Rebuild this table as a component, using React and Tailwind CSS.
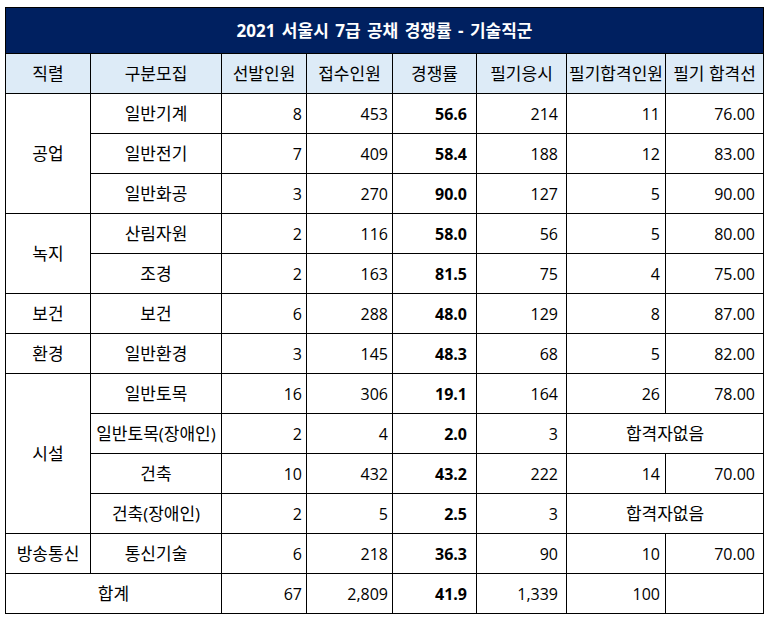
import React from 'react';

const rows = [
  { group: '공업', span: 3, name: '일반기계', v: ['8', '453', '56.6', '214', '11', '76.00'] },
  { name: '일반전기', v: ['7', '409', '58.4', '188', '12', '83.00'] },
  { name: '일반화공', v: ['3', '270', '90.0', '127', '5', '90.00'] },
  { group: '녹지', span: 2, name: '산림자원', v: ['2', '116', '58.0', '56', '5', '80.00'] },
  { name: '조경', v: ['2', '163', '81.5', '75', '4', '75.00'] },
  { group: '보건', span: 1, name: '보건', v: ['6', '288', '48.0', '129', '8', '87.00'] },
  { group: '환경', span: 1, name: '일반환경', v: ['3', '145', '48.3', '68', '5', '82.00'] },
  { group: '시설', span: 4, name: '일반토목', v: ['16', '306', '19.1', '164', '26', '78.00'] },
  { name: '일반토목(장애인)', v: ['2', '4', '2.0', '3'], none: true },
  { name: '건축', v: ['10', '432', '43.2', '222', '14', '70.00'] },
  { name: '건축(장애인)', v: ['2', '5', '2.5', '3'], none: true },
  { group: '방송통신', span: 1, name: '통신기술', v: ['6', '218', '36.3', '90', '10', '70.00'] },
];

const headers = ['직렬', '구분모집', '선발인원', '접수인원', '경쟁률', '필기응시', '필기합격인원', '필기 합격선'];

// right padding per numeric column
const pad = ['pr-[4px]', 'pr-[4px]', 'pr-[9px] font-bold', 'pr-[8px]', 'pr-[5px]', 'pr-[8px]'];

const cell = 'border border-black h-[40px] p-0';
const ko = 'text-[17px] text-center whitespace-nowrap';

export default function App() {
  return (
    <div className="pt-[7px] pl-[5px] bg-white min-h-screen" style={{ fontFamily: '"Open Sans", "Noto Sans CJK KR", sans-serif' }}>
      <table className="table-fixed border-collapse w-[758px] text-[16px] text-black leading-none">
        <colgroup>
          <col className="w-[85px]" />
          <col className="w-[131px]" />
          <col className="w-[85px]" />
          <col className="w-[86px]" />
          <col className="w-[84px]" />
          <col className="w-[90px]" />
          <col className="w-[99px]" />
          <col className="w-[98px]" />
        </colgroup>
        <thead>
          <tr>
            <th colSpan={8} className="border border-black h-[46px] bg-[#002060] text-white text-[17px] font-bold text-center [word-spacing:2px]">
              2021 서울시 7급 공채 경쟁률 - 기술직군
            </th>
          </tr>
          <tr>
            {headers.map(h => (
              <th key={h} className={`${cell} ${ko} bg-[#ddebf7] font-normal`}>{h}</th>
            ))}
          </tr>
        </thead>
        <tbody>
          {rows.map((r, i) => (
            <tr key={i}>
              {r.group && (
                <td rowSpan={r.span} className={`${cell} ${ko}`}>{r.group}</td>
              )}
              <td className={`${cell} ${ko}`}>{r.name}</td>
              {r.v.map((x, j) => (
                <td key={j} className={`${cell} text-right ${pad[j]}`}>{x}</td>
              ))}
              {r.none && (
                <td colSpan={2} className={`${cell} ${ko}`}>합격자없음</td>
              )}
            </tr>
          ))}
          <tr>
            <td colSpan={2} className={`${cell} ${ko}`}>합계</td>
            <td className={`${cell} text-right ${pad[0]}`}>67</td>
            <td className={`${cell} text-right ${pad[1]}`}>2,809</td>
            <td className={`${cell} text-right ${pad[2]}`}>41.9</td>
            <td className={`${cell} text-right ${pad[3]}`}>1,339</td>
            <td className={`${cell} text-right ${pad[4]}`}>100</td>
            <td className={cell}></td>
          </tr>
        </tbody>
      </table>
    </div>
  );
}
